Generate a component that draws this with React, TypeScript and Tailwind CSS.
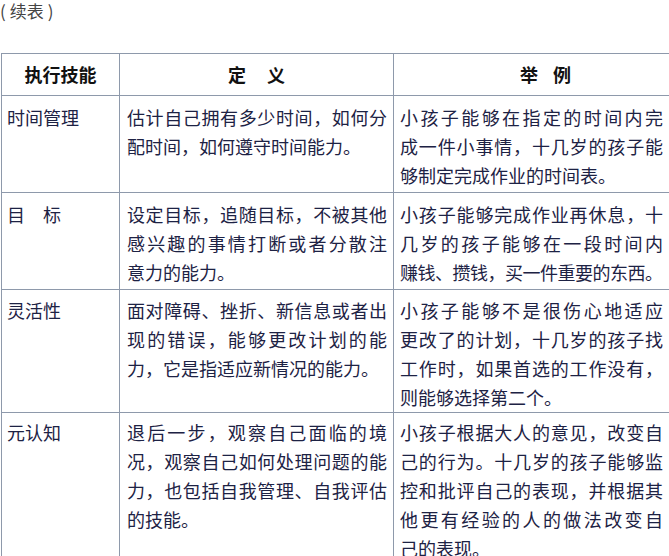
import React from 'react';

type Row = {
  skill: string;
  height: string;
  pad: string;
  def: string[];
  example: string[];
};

const rows: Row[] = [
  {
    skill: '时间管理',
    height: 'h-[97px]',
    pad: 'pt-[7px]',
    def: ['估计自己拥有多少时间，如何分', '配时间，如何遵守时间能力。'],
    example: ['小孩子能够在指定的时间内完', '成一件小事情，十几岁的孩子能', '够制定完成作业的时间表。'],
  },
  {
    skill: '目　标',
    height: 'h-[97px]',
    pad: 'pt-[7px]',
    def: ['设定目标，追随目标，不被其他', '感兴趣的事情打断或者分散注', '意力的能力。'],
    example: ['小孩子能够完成作业再休息，十', '几岁的孩子能够在一段时间内', '赚钱、攒钱，买一件重要的东西。'],
  },
  {
    skill: '灵活性',
    height: 'h-[123px]',
    pad: 'pt-[6px]',
    def: ['面对障碍、挫折、新信息或者出', '现的错误，能够更改计划的能', '力，它是指适应新情况的能力。'],
    example: ['小孩子能够不是很伤心地适应', '更改了的计划，十几岁的孩子找', '工作时，如果首选的工作没有，', '则能够选择第二个。'],
  },
  {
    skill: '元认知',
    height: 'h-[160px]',
    pad: 'pt-[5px]',
    def: ['退后一步，观察自己面临的境', '况，观察自己如何处理问题的能', '力，也包括自我管理、自我评估', '的技能。'],
    example: ['小孩子根据大人的意见，改变自', '己的行为。十几岁的孩子能够监', '控和批评自己的表现，并根据其', '他更有经验的人的做法改变自', '己的表现。'],
  },
];

// every line but the last is stretched to the full column width
function Lines({ lines, width }: { lines: string[]; width: string }) {
  return (
    <div className={width}>
      {lines.map((line, i) => {
        const last = i === lines.length - 1;
        const tight = line.length > 14;
        return (
          <div
            key={i}
            className={`whitespace-nowrap ${last ? 'text-left' : 'text-justify [text-align-last:justify]'} ${tight ? 'tracking-[-0.5px]' : ''}`}
          >
            {line}
          </div>
        );
      })}
    </div>
  );
}

export default function App() {
  return (
    <div
      className="w-[669px] h-[556px] overflow-hidden bg-white text-[#1d2244]"
      style={{ fontFamily: '"Noto Sans CJK SC", "Noto Sans", sans-serif' }}
    >
      <div className="h-[53px]">
        <div className="flex items-center gap-[4px] text-[17px] leading-[22px] text-[#444]">
          <span>(</span>
          <span>续表</span>
          <span>)</span>
        </div>
      </div>

      <div className="ml-px w-[683px] grid grid-cols-[118px_274px_290px] border-t border-l border-[#8e99ab] text-[18px] leading-[29px]">
        <div className="h-[42px] border-r border-b border-[#8e99ab] flex items-center justify-center font-bold text-[#111]">
          执行技能
        </div>
        <div className="h-[42px] border-r border-b border-[#8e99ab] flex items-center justify-center gap-[21px] font-bold text-[#111]">
          <span>定</span>
          <span>义</span>
        </div>
        <div className="h-[42px] border-r border-b border-[#8e99ab] flex items-center justify-center gap-[15px] pl-[14px] font-bold text-[#111]">
          <span>举</span>
          <span>例</span>
        </div>

        {rows.map((row) => (
          <React.Fragment key={row.skill}>
            <div className={`${row.height} ${row.pad} border-r border-b border-[#8e99ab] pl-[5px] whitespace-pre`}>
              {row.skill}
            </div>
            <div className={`${row.height} ${row.pad} border-r border-b border-[#8e99ab] pl-[7px]`}>
              <Lines lines={row.def} width="w-[260px]" />
            </div>
            <div className={`${row.height} ${row.pad} border-r border-b border-[#8e99ab] pl-[6px]`}>
              <Lines lines={row.example} width="w-[263px]" />
            </div>
          </React.Fragment>
        ))}
      </div>
    </div>
  );
}
